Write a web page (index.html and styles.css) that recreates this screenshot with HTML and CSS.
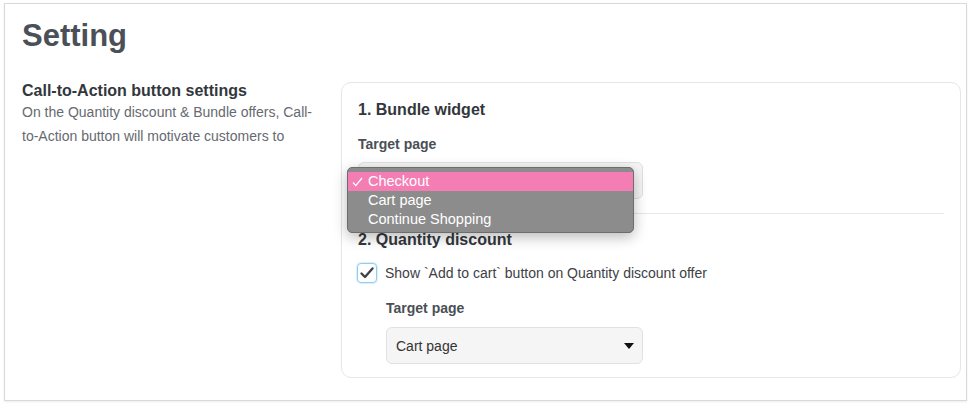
FILE: index.html
```html
<!DOCTYPE html>
<html lang="en">
<head>
<meta charset="utf-8">
<title>Setting</title>
<link rel="stylesheet" href="styles.css">
</head>
<body>
<div class="frame">
  <h1 class="page-title">Setting</h1>
  <div class="section">
    <div class="section-info">
      <h2 class="section-title">Call-to-Action button settings</h2>
      <p class="section-desc">On the Quantity discount &amp; Bundle offers, Call-to-Action button will motivate customers to</p>
    </div>
    <div class="card">
      <h3 class="group-title">1. Bundle widget</h3>
      <div class="field">
        <div class="field-label">Target page</div>
        <div class="select-wrap">
          <div class="select">
            <span class="select-value">Checkout</span>
            <svg class="caret" width="10" height="6" viewBox="0 0 10 6"><path d="M0 0H10L5 6Z" fill="#111"/></svg>
          </div>
          <div class="menu">
            <div class="menu-item selected">
              <svg class="menu-check" width="11" height="10" viewBox="0 0 11 10"><path d="M1 5.5L3.8 8.6L10 1" fill="none" stroke="#fff" stroke-width="1.3"/></svg>
              Checkout
            </div>
            <div class="menu-item">Cart page</div>
            <div class="menu-item">Continue Shopping</div>
          </div>
        </div>
      </div>
      <div class="divider"></div>
      <h3 class="group-title">2. Quantity discount</h3>
      <label class="check-row">
        <span class="checkbox">
          <svg width="16" height="14" viewBox="0 0 16 14"><path d="M2.5 7.5L6 11L13.5 2.5" fill="none" stroke="#3f4348" stroke-width="2.4" stroke-linecap="round" stroke-linejoin="round"/></svg>
        </span>
        <span class="check-label">Show `Add to cart` button on Quantity discount offer</span>
      </label>
      <div class="field indented">
        <div class="field-label">Target page</div>
        <div class="select short">
          <span class="select-value">Cart page</span>
          <svg class="caret" width="10" height="6" viewBox="0 0 10 6"><path d="M0 0H10L5 6Z" fill="#111"/></svg>
        </div>
      </div>
    </div>
  </div>
</div>
</body>
</html>
```

FILE: styles.css
```css
* { box-sizing: border-box; }

html, body {
  margin: 0;
  padding: 0;
  background: #ffffff;
}

body {
  font-family: "Liberation Sans", Arial, Helvetica, sans-serif;
  color: #333;
}

.frame {
  margin: 3px 6px 5px 4px;
  height: 398px;
  border: 1px solid #d9d9d9;
  box-shadow: 0 1px 2px rgba(0, 0, 0, 0.08);
  padding: 14px 5px 0 17px;
  background: #fff;
}

.page-title {
  margin: 0;
  font-size: 31px;
  line-height: 36px;
  font-weight: 700;
  color: #4b5058;
}

.section {
  margin-top: 28px;
  display: grid;
  grid-template-columns: 300px 1fr;
  column-gap: 19px;
}

.section-title {
  margin: 0;
  font-size: 16px;
  line-height: 18px;
  font-weight: 700;
  color: #33373c;
}

.section-desc {
  margin: 0;
  font-size: 14px;
  line-height: 24px;
  color: #666a70;
}

.card {
  border: 1px solid #e4e6ea;
  border-radius: 10px;
  padding: 17px 16px 13px 16px;
  background: #fff;
}

.group-title {
  margin: 0;
  font-size: 16px;
  line-height: 20px;
  font-weight: 700;
  color: #33373c;
}

.field {
  margin-top: 15px;
}

.field-label {
  font-size: 14px;
  line-height: 18px;
  font-weight: 700;
  color: #4a4f56;
  margin-bottom: 9px;
}

.select-wrap {
  position: relative;
  width: 285px;
}

.select {
  width: 285px;
  height: 37px;
  display: flex;
  align-items: center;
  justify-content: space-between;
  padding: 0 8px 0 9px;
  background: #f5f5f5;
  border: 1px solid #e1e1e1;
  border-radius: 6px;
  font-size: 14px;
  color: #333;
}

.select.short {
  width: 257px;
}

.caret {
  display: block;
}

.menu {
  position: absolute;
  left: -11px;
  top: 5px;
  width: 287px;
  height: 66px;
  padding: 4px 0;
  background: #8c8c8c;
  border: 1px solid #6d6d6d;
  border-radius: 5px;
  box-shadow: 0 4px 14px rgba(0, 0, 0, 0.28);
  z-index: 2;
}

.menu-item {
  position: relative;
  height: 19px;
  line-height: 19px;
  padding-left: 20px;
  font-size: 14.5px;
  color: #fff;
}

.menu-item.selected {
  background: #f47eb4;
}

.menu-check {
  position: absolute;
  left: 4px;
  top: 5px;
}

.divider {
  height: 1px;
  background: #e6e8eb;
  margin: 14px 0 16px;
}

.check-row {
  margin-top: 13px;
  display: flex;
  align-items: center;
  gap: 8px;
}

.checkbox {
  width: 20px;
  height: 20px;
  margin-left: -1px;
  border: 1.5px solid #8fcdf3;
  border-radius: 4px;
  box-shadow: 0 0 0 1px #dcf0fc;
  display: flex;
  align-items: center;
  justify-content: center;
  background: #fff;
}

.check-label {
  font-size: 14px;
  line-height: 20px;
  color: #3d4146;
}

.field.indented {
  margin-left: 28px;
  margin-top: 16px;
}

.field.indented .field-label {
  margin-bottom: 10px;
}
```
